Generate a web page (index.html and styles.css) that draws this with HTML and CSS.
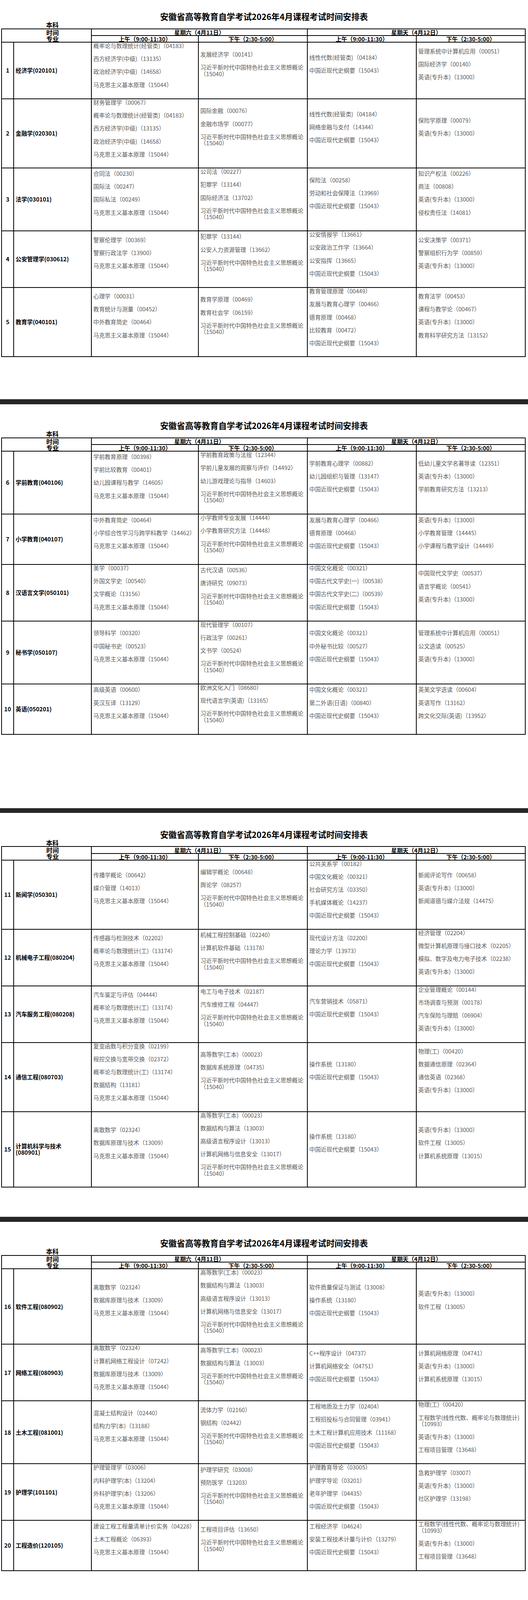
FILE: index.html
```html
<!DOCTYPE html>
<html lang="zh-CN">
<head>
<meta charset="utf-8">
<title>安徽省高等教育自学考试2026年4月课程考试时间安排表</title>
<link rel="stylesheet" href="styles.css">
</head>
<body>
<div class="page">

<section class="sheet first">
  <h1 class="title">安徽省高等教育自学考试2026年4月课程考试时间安排表</h1>
  <div class="benke">本科</div>
  <table class="grid">
    <colgroup><col class="c-no"><col class="c-major"><col class="c-a"><col class="c-b"><col class="c-b"><col class="c-b"></colgroup>
    <thead>
      <tr class="hr1"><td class="corner" colspan="2" rowspan="2"><div>时间</div><div>专业</div></td><td class="hd" colspan="2">星期六（4月11日）</td><td class="hd" colspan="2">星期天（4月12日）</td></tr>
      <tr class="hr2"><td class="hd">上午（9:00-11:30）</td><td class="hd">下午（2:30-5:00）</td><td class="hd">上午（9:00-11:30）</td><td class="hd">下午（2:30-5:00）</td></tr>
    </thead>
    <tbody>
      <tr class="r9">
        <td class="no">1</td><td class="major">经济学(020101)</td>
        <td><div class="cell"><div class="list"><p>概率论与数理统计(经管类)（04183）</p><p>西方经济学(中级)（13135）</p><p>政治经济学(中级)（14658）</p><p>马克思主义基本原理（15044）</p></div></div></td>
        <td><div class="cell"><div class="list"><p>发展经济学（00141）</p><p>习近平新时代中国特色社会主义思想概论（15040）</p></div></div></td>
        <td><div class="cell"><div class="list"><p>线性代数(经管类)（04184）</p><p>中国近现代史纲要（15043）</p></div></div></td>
        <td><div class="cell"><div class="list"><p>管理系统中计算机应用（00051）</p><p>国际经济学（00140）</p><p>英语(专升本)（13000）</p></div></div></td>
      </tr>
      <tr class="r11">
        <td class="no">2</td><td class="major">金融学(020301)</td>
        <td><div class="cell"><div class="list"><p>财务管理学（00067）</p><p>概率论与数理统计(经管类)（04183）</p><p>西方经济学(中级)（13135）</p><p>政治经济学(中级)（14658）</p><p>马克思主义基本原理（15044）</p></div></div></td>
        <td><div class="cell"><div class="list"><p>国际金融（00076）</p><p>金融市场学（00077）</p><p>习近平新时代中国特色社会主义思想概论（15040）</p></div></div></td>
        <td><div class="cell"><div class="list"><p>线性代数(经管类)（04184）</p><p>网络金融与支付（14344）</p><p>中国近现代史纲要（15043）</p></div></div></td>
        <td><div class="cell"><div class="list"><p>保险学原理（00079）</p><p>英语(专升本)（13000）</p></div></div></td>
      </tr>
      <tr class="r10">
        <td class="no">3</td><td class="major">法学(030101)</td>
        <td><div class="cell"><div class="list"><p>合同法（00230）</p><p>国际法（00247）</p><p>国际私法（00249）</p><p>马克思主义基本原理（15044）</p></div></div></td>
        <td><div class="cell"><div class="list"><p>公司法（00227）</p><p>犯罪学（13144）</p><p>国际经济法（13702）</p><p>习近平新时代中国特色社会主义思想概论（15040）</p></div></div></td>
        <td><div class="cell"><div class="list"><p>保险法（00258）</p><p>劳动和社会保障法（13969）</p><p>中国近现代史纲要（15043）</p></div></div></td>
        <td><div class="cell"><div class="list"><p>知识产权法（00226）</p><p>商法（00808）</p><p>英语(专升本)（13000）</p><p>侵权责任法（14081）</p></div></div></td>
      </tr>
      <tr class="r9">
        <td class="no">4</td><td class="major">公安管理学(030612)</td>
        <td><div class="cell"><div class="list"><p>警察伦理学（00369）</p><p>警察行政法学（13900）</p><p>马克思主义基本原理（15044）</p></div></div></td>
        <td><div class="cell"><div class="list"><p>犯罪学（13144）</p><p>公安人力资源管理（13662）</p><p>习近平新时代中国特色社会主义思想概论（15040）</p></div></div></td>
        <td><div class="cell"><div class="list"><p>公安情报学（13661）</p><p>公安政治工作学（13664）</p><p>公安指挥（13665）</p><p>中国近现代史纲要（15043）</p></div></div></td>
        <td><div class="cell"><div class="list"><p>公安决策学（00371）</p><p>警察组织行为学（00859）</p><p>英语(专升本)（13000）</p></div></div></td>
      </tr>
      <tr class="r11">
        <td class="no">5</td><td class="major">教育学(040101)</td>
        <td><div class="cell"><div class="list"><p>心理学（00031）</p><p>教育统计与测量（00452）</p><p>中外教育简史（00464）</p><p>马克思主义基本原理（15044）</p></div></div></td>
        <td><div class="cell"><div class="list"><p>教育学原理（00469）</p><p>教育社会学（06159）</p><p>习近平新时代中国特色社会主义思想概论（15040）</p></div></div></td>
        <td><div class="cell"><div class="list"><p>教育管理原理（00449）</p><p>发展与教育心理学（00466）</p><p>德育原理（00468）</p><p>比较教育（00472）</p><p>中国近现代史纲要（15043）</p></div></div></td>
        <td><div class="cell"><div class="list"><p>教育法学（00453）</p><p>课程与教学论（00467）</p><p>英语(专升本)（13000）</p><p>教育科学研究方法（13152）</p></div></div></td>
      </tr>
    </tbody>
  </table>
</section>

<div class="bar g1"></div>

<section class="sheet">
  <h1 class="title">安徽省高等教育自学考试2026年4月课程考试时间安排表</h1>
  <div class="benke">本科</div>
  <table class="grid">
    <colgroup><col class="c-no"><col class="c-major"><col class="c-a"><col class="c-b"><col class="c-b"><col class="c-b"></colgroup>
    <thead>
      <tr class="hr1"><td class="corner" colspan="2" rowspan="2"><div>时间</div><div>专业</div></td><td class="hd" colspan="2">星期六（4月11日）</td><td class="hd" colspan="2">星期天（4月12日）</td></tr>
      <tr class="hr2"><td class="hd">上午（9:00-11:30）</td><td class="hd">下午（2:30-5:00）</td><td class="hd">上午（9:00-11:30）</td><td class="hd">下午（2:30-5:00）</td></tr>
    </thead>
    <tbody>
      <tr class="r10">
        <td class="no">6</td><td class="major">学前教育(040106)</td>
        <td><div class="cell"><div class="list"><p>学前教育原理（00398）</p><p>学前比较教育（00401）</p><p>幼儿园课程与教学（14605）</p><p>马克思主义基本原理（15044）</p></div></div></td>
        <td><div class="cell"><div class="list"><p>学前教育政策与法规（12344）</p><p>学前儿童发展的观察与评价（14492）</p><p>幼儿游戏理论与指导（14603）</p><p>习近平新时代中国特色社会主义思想概论（15040）</p></div></div></td>
        <td><div class="cell"><div class="list"><p>学前教育心理学（00882）</p><p>幼儿园组织与管理（13147）</p><p>中国近现代史纲要（15043）</p></div></div></td>
        <td><div class="cell"><div class="list"><p>低幼儿童文学名著导读（12351）</p><p>英语(专升本)（13000）</p><p>学前教育研究方法（13213）</p></div></div></td>
      </tr>
      <tr class="r8">
        <td class="no">7</td><td class="major">小学教育(040107)</td>
        <td><div class="cell"><div class="list"><p>中外教育简史（00464）</p><p>小学综合性学习与跨学科教学（14462）</p><p>马克思主义基本原理（15044）</p></div></div></td>
        <td><div class="cell"><div class="list"><p>小学教师专业发展（14444）</p><p>小学教育研究方法（14448）</p><p>习近平新时代中国特色社会主义思想概论（15040）</p></div></div></td>
        <td><div class="cell"><div class="list"><p>发展与教育心理学（00466）</p><p>德育原理（00468）</p><p>中国近现代史纲要（15043）</p></div></div></td>
        <td><div class="cell"><div class="list"><p>英语(专升本)（13000）</p><p>小学教育管理（14445）</p><p>小学课程与教学设计（14449）</p></div></div></td>
      </tr>
      <tr class="r9">
        <td class="no">8</td><td class="major">汉语言文学(050101)</td>
        <td><div class="cell"><div class="list"><p>美学（00037）</p><p>外国文学史（00540）</p><p>文学概论（13156）</p><p>马克思主义基本原理（15044）</p></div></div></td>
        <td><div class="cell"><div class="list"><p>古代汉语（00536）</p><p>唐诗研究（09073）</p><p>习近平新时代中国特色社会主义思想概论（15040）</p></div></div></td>
        <td><div class="cell"><div class="list"><p>中国文化概论（00321）</p><p>中国古代文学史(一)（00538）</p><p>中国古代文学史(二)（00539）</p><p>中国近现代史纲要（15043）</p></div></div></td>
        <td><div class="cell"><div class="list"><p>中国现代文学史（00537）</p><p>语言学概论（00541）</p><p>英语(专升本)（13000）</p></div></div></td>
      </tr>
      <tr class="r10">
        <td class="no">9</td><td class="major">秘书学(050107)</td>
        <td><div class="cell"><div class="list"><p>领导科学（00320）</p><p>中国秘书史（00523）</p><p>马克思主义基本原理（15044）</p></div></div></td>
        <td><div class="cell"><div class="list"><p>现代管理学（00107）</p><p>行政法学（00261）</p><p>文书学（00524）</p><p>习近平新时代中国特色社会主义思想概论（15040）</p></div></div></td>
        <td><div class="cell"><div class="list"><p>中国文化概论（00321）</p><p>中外秘书比较（00527）</p><p>中国近现代史纲要（15043）</p></div></div></td>
        <td><div class="cell"><div class="list"><p>管理系统中计算机应用（00051）</p><p>公文选读（00525）</p><p>英语(专升本)（13000）</p></div></div></td>
      </tr>
      <tr class="r8">
        <td class="no">10</td><td class="major">英语(050201)</td>
        <td><div class="cell"><div class="list"><p>高级英语（00600）</p><p>英汉互译（13129）</p><p>马克思主义基本原理（15044）</p></div></div></td>
        <td><div class="cell"><div class="list"><p>欧洲文化入门（08680）</p><p>现代语言学(英语)（13165）</p><p>习近平新时代中国特色社会主义思想概论（15040）</p></div></div></td>
        <td><div class="cell"><div class="list"><p>中国文化概论（00321）</p><p>第二外语(日语)（00840）</p><p>中国近现代史纲要（15043）</p></div></div></td>
        <td><div class="cell"><div class="list"><p>英美文学选读（00604）</p><p>英语写作（13162）</p><p>跨文化交际(英语)（13952）</p></div></div></td>
      </tr>
    </tbody>
  </table>
</section>

<div class="bar g2"></div>

<section class="sheet">
  <h1 class="title">安徽省高等教育自学考试2026年4月课程考试时间安排表</h1>
  <div class="benke">本科</div>
  <table class="grid">
    <colgroup><col class="c-no"><col class="c-major"><col class="c-a"><col class="c-b"><col class="c-b"><col class="c-b"></colgroup>
    <thead>
      <tr class="hr1"><td class="corner" colspan="2" rowspan="2"><div>时间</div><div>专业</div></td><td class="hd" colspan="2">星期六（4月11日）</td><td class="hd" colspan="2">星期天（4月12日）</td></tr>
      <tr class="hr2"><td class="hd">上午（9:00-11:30）</td><td class="hd">下午（2:30-5:00）</td><td class="hd">上午（9:00-11:30）</td><td class="hd">下午（2:30-5:00）</td></tr>
    </thead>
    <tbody>
      <tr class="r11">
        <td class="no">11</td><td class="major">新闻学(050301)</td>
        <td><div class="cell"><div class="list"><p>传播学概论（00642）</p><p>媒介管理（14013）</p><p>马克思主义基本原理（15044）</p></div></div></td>
        <td><div class="cell"><div class="list"><p>编辑学概论（00648）</p><p>舆论学（08257）</p><p>习近平新时代中国特色社会主义思想概论（15040）</p></div></div></td>
        <td><div class="cell"><div class="list"><p>公共关系学（00182）</p><p>中国文化概论（00321）</p><p>社会研究方法（03350）</p><p>手机媒体概论（14237）</p><p>中国近现代史纲要（15043）</p></div></div></td>
        <td><div class="cell"><div class="list"><p>新闻评论写作（00658）</p><p>英语(专升本)（13000）</p><p>新闻道德与媒介法规（14475）</p></div></div></td>
      </tr>
      <tr class="r9">
        <td class="no">12</td><td class="major">机械电子工程(080204)</td>
        <td><div class="cell"><div class="list"><p>传感器与检测技术（02202）</p><p>概率论与数理统计(工)（13174）</p><p>马克思主义基本原理（15044）</p></div></div></td>
        <td><div class="cell"><div class="list"><p>机械工程控制基础（02240）</p><p>计算机软件基础（13178）</p><p>习近平新时代中国特色社会主义思想概论（15040）</p></div></div></td>
        <td><div class="cell"><div class="list"><p>现代设计方法（02200）</p><p>理论力学（13973）</p><p>中国近现代史纲要（15043）</p></div></div></td>
        <td><div class="cell"><div class="list"><p>经济管理（02204）</p><p>微型计算机原理与接口技术（02205）</p><p>模拟、数字及电力电子技术（02238）</p><p>英语(专升本)（13000）</p></div></div></td>
      </tr>
      <tr class="r9">
        <td class="no">13</td><td class="major">汽车服务工程(080208)</td>
        <td><div class="cell"><div class="list"><p>汽车鉴定与评估（04444）</p><p>概率论与数理统计(工)（13174）</p><p>马克思主义基本原理（15044）</p></div></div></td>
        <td><div class="cell"><div class="list"><p>电工与电子技术（02187）</p><p>汽车维修工程（04447）</p><p>习近平新时代中国特色社会主义思想概论（15040）</p></div></div></td>
        <td><div class="cell"><div class="list"><p>汽车营销技术（05871）</p><p>中国近现代史纲要（15043）</p></div></div></td>
        <td><div class="cell"><div class="list"><p>企业管理概论（00144）</p><p>市场调查与预测（00178）</p><p>汽车保险与理赔（06904）</p><p>英语(专升本)（13000）</p></div></div></td>
      </tr>
      <tr class="r11">
        <td class="no">14</td><td class="major">通信工程(080703)</td>
        <td><div class="cell"><div class="list"><p>复变函数与积分变换（02199）</p><p>程控交换与宽带交换（02372）</p><p>概率论与数理统计(工)（13174）</p><p>数据结构（13181）</p><p>马克思主义基本原理（15044）</p></div></div></td>
        <td><div class="cell"><div class="list"><p>高等数学(工本)（00023）</p><p>数据库系统原理（04735）</p><p>习近平新时代中国特色社会主义思想概论（15040）</p></div></div></td>
        <td><div class="cell"><div class="list"><p>操作系统（13180）</p><p>中国近现代史纲要（15043）</p></div></div></td>
        <td><div class="cell"><div class="list"><p>物理(工)（00420）</p><p>数据通信原理（02364）</p><p>通信英语（02368）</p><p>英语(专升本)（13000）</p></div></div></td>
      </tr>
      <tr class="r12">
        <td class="no">15</td><td class="major">计算机科学与技术<br>(080901)</td>
        <td><div class="cell"><div class="list"><p>离散数学（02324）</p><p>数据库原理与技术（13009）</p><p>马克思主义基本原理（15044）</p></div></div></td>
        <td><div class="cell"><div class="list"><p>高等数学(工本)（00023）</p><p>数据结构与算法（13003）</p><p>高级语言程序设计（13013）</p><p>计算机网络与信息安全（13017）</p><p>习近平新时代中国特色社会主义思想概论（15040）</p></div></div></td>
        <td><div class="cell"><div class="list"><p>操作系统（13180）</p><p>中国近现代史纲要（15043）</p></div></div></td>
        <td><div class="cell"><div class="list"><p>英语(专升本)（13000）</p><p>软件工程（13005）</p><p>计算机系统原理（13015）</p></div></div></td>
      </tr>
    </tbody>
  </table>
</section>

<div class="bar g3"></div>

<section class="sheet">
  <h1 class="title">安徽省高等教育自学考试2026年4月课程考试时间安排表</h1>
  <div class="benke">本科</div>
  <table class="grid">
    <colgroup><col class="c-no"><col class="c-major"><col class="c-a"><col class="c-b"><col class="c-b"><col class="c-b"></colgroup>
    <thead>
      <tr class="hr1"><td class="corner" colspan="2" rowspan="2"><div>时间</div><div>专业</div></td><td class="hd" colspan="2">星期六（4月11日）</td><td class="hd" colspan="2">星期天（4月12日）</td></tr>
      <tr class="hr2"><td class="hd">上午（9:00-11:30）</td><td class="hd">下午（2:30-5:00）</td><td class="hd">上午（9:00-11:30）</td><td class="hd">下午（2:30-5:00）</td></tr>
    </thead>
    <tbody>
      <tr class="r12">
        <td class="no">16</td><td class="major">软件工程(080902)</td>
        <td><div class="cell"><div class="list"><p>离散数学（02324）</p><p>数据库原理与技术（13009）</p><p>马克思主义基本原理（15044）</p></div></div></td>
        <td><div class="cell"><div class="list"><p>高等数学(工本)（00023）</p><p>数据结构与算法（13003）</p><p>高级语言程序设计（13013）</p><p>计算机网络与信息安全（13017）</p><p>习近平新时代中国特色社会主义思想概论（15040）</p></div></div></td>
        <td><div class="cell"><div class="list"><p>软件质量保证与测试（13008）</p><p>操作系统（13180）</p><p>中国近现代史纲要（15043）</p></div></div></td>
        <td><div class="cell"><div class="list"><p>英语(专升本)（13000）</p><p>软件工程（13005）</p></div></div></td>
      </tr>
      <tr class="r9">
        <td class="no">17</td><td class="major">网络工程(080903)</td>
        <td><div class="cell"><div class="list"><p>离散数学（02324）</p><p>计算机网络工程设计（07242）</p><p>数据库原理与技术（13009）</p><p>马克思主义基本原理（15044）</p></div></div></td>
        <td><div class="cell"><div class="list"><p>高等数学(工本)（00023）</p><p>数据结构与算法（13003）</p><p>习近平新时代中国特色社会主义思想概论（15040）</p></div></div></td>
        <td><div class="cell"><div class="list"><p>C++程序设计（04737）</p><p>计算机网络安全（04751）</p><p>中国近现代史纲要（15043）</p></div></div></td>
        <td><div class="cell"><div class="list"><p>计算机网络原理（04741）</p><p>英语(专升本)（13000）</p><p>计算机系统原理（13015）</p></div></div></td>
      </tr>
      <tr class="r10">
        <td class="no">18</td><td class="major">土木工程(081001)</td>
        <td><div class="cell"><div class="list"><p>混凝土结构设计（02440）</p><p>结构力学(本)（13188）</p><p>马克思主义基本原理（15044）</p></div></div></td>
        <td><div class="cell"><div class="list"><p>流体力学（02160）</p><p>钢结构（02442）</p><p>习近平新时代中国特色社会主义思想概论（15040）</p></div></div></td>
        <td><div class="cell"><div class="list"><p>工程地质及土力学（02404）</p><p>工程招投标与合同管理（03941）</p><p>土木工程计算机应用技术（11168）</p><p>中国近现代史纲要（15043）</p></div></div></td>
        <td><div class="cell"><div class="list"><p>物理(工)（00420）</p><p>工程数学(线性代数、概率论与数理统计)（10993）</p><p>英语(专升本)（13000）</p><p>工程项目管理（13648）</p></div></div></td>
      </tr>
      <tr class="r9">
        <td class="no">19</td><td class="major">护理学(101101)</td>
        <td><div class="cell"><div class="list"><p>护理管理学（03006）</p><p>内科护理学(本)（13204）</p><p>外科护理学(本)（13206）</p><p>马克思主义基本原理（15044）</p></div></div></td>
        <td><div class="cell"><div class="list"><p>护理学研究（03008）</p><p>预防医学（13203）</p><p>习近平新时代中国特色社会主义思想概论（15040）</p></div></div></td>
        <td><div class="cell"><div class="list"><p>护理教育导论（03005）</p><p>护理学导论（03201）</p><p>老年护理学（04435）</p><p>中国近现代史纲要（15043）</p></div></div></td>
        <td><div class="cell"><div class="list"><p>急救护理学（03007）</p><p>英语(专升本)（13000）</p><p>社区护理学（13198）</p></div></div></td>
      </tr>
      <tr class="r8">
        <td class="no">20</td><td class="major">工程造价(120105)</td>
        <td><div class="cell"><div class="list"><p>建设工程工程量清单计价实务（04228）</p><p>土木工程概论（06393）</p><p>马克思主义基本原理（15044）</p></div></div></td>
        <td><div class="cell"><div class="list"><p>工程项目评估（13650）</p><p>习近平新时代中国特色社会主义思想概论（15040）</p></div></div></td>
        <td><div class="cell"><div class="list"><p>工程经济学（04624）</p><p>安装工程技术计量与计价（13279）</p><p>中国近现代史纲要（15043）</p></div></div></td>
        <td><div class="cell"><div class="list"><p>工程数学(线性代数、概率论与数理统计)（10993）</p><p>英语(专升本)（13000）</p><p>工程项目管理（13648）</p></div></div></td>
      </tr>
    </tbody>
  </table>
</section>

</div>
</body>
</html>
```

FILE: styles.css
```css
:root {
  --u: 16.104px;
  --lh: 16.58px;
  --cjk: "Noto Sans CJK SC", "Noto Sans", sans-serif;
}

html, body {
  margin: 0;
  padding: 0;
  background: #ffffff;
}

body {
  width: 1352px;
  font-family: var(--cjk);
  color: #000;
}

.page {
  padding-top: 31.3px;
}

.sheet {
  padding-top: 43.3px;
}

.sheet.first {
  padding-top: 0;
}

.title {
  margin: 0;
  height: 22.1px;
  font-size: 21.33px;
  line-height: 22.1px;
  font-weight: 700;
  text-align: center;
}

.benke {
  margin: 0.9px 0 0 118px;
  height: 18.4px;
  font-size: 16px;
  line-height: 18.4px;
  font-weight: 700;
}

.bar {
  height: 12.9px;
  background: #262626;
}

.bar.g1 { margin-top: 107.8px; }
.bar.g2 { margin-top: 187.7px; }
.bar.g3 { margin-top: 75.2px; }

.grid {
  border-collapse: collapse;
  table-layout: fixed;
  width: 1342px;
  margin-left: 3px;
}

.c-no { width: 31px; }
.c-major { width: 199px; }
.c-a { width: 274px; }
.c-b { width: 279px; }

.grid td {
  border: 2px solid #000;
  padding: 0;
}

.hr1 td { height: 15.5px; }
.hr2 td { height: 15px; }

.hd {
  font-size: 14.67px;
  line-height: 15px;
  font-weight: 700;
  text-align: center;
  vertical-align: bottom;
  white-space: nowrap;
}

.corner {
  text-align: center;
  padding-left: 31px !important;
  font-size: 16px;
  line-height: 16px;
  font-weight: 700;
  vertical-align: middle;
}

.no {
  text-align: center;
  font-size: 14.67px;
  line-height: var(--lh);
  font-weight: 700;
  vertical-align: middle;
}

.major {
  padding-left: 4px !important;
  font-size: 14.67px;
  line-height: var(--lh);
  font-weight: 700;
  vertical-align: middle;
}

.cell {
  display: flex;
  flex-direction: column;
  padding: 0 2px 0 4px;
}

.list {
  margin: auto 0;
  padding-bottom: var(--lh);
}

.list p {
  margin: 0 0 var(--lh);
  font-size: 14.67px;
  line-height: var(--lh);
  font-weight: 400;
  color: #5a5a5a;
}

.r8 .cell  { height: calc(var(--u) * 8 - 2px); }
.r9 .cell  { height: calc(var(--u) * 9 - 2px); }
.r10 .cell { height: calc(var(--u) * 10 - 2px); }
.r11 .cell { height: calc(var(--u) * 11 - 2px); }
.r12 .cell { height: calc(var(--u) * 12 - 2px); }
```
